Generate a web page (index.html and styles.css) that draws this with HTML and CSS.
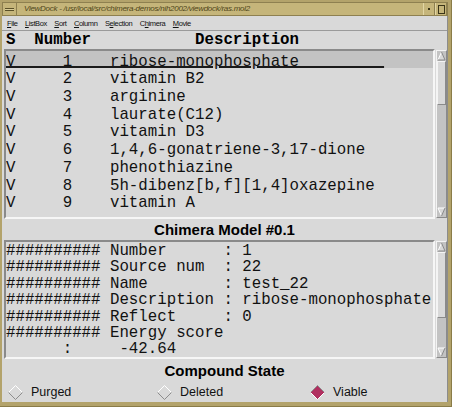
FILE: index.html
```html
<!DOCTYPE html>
<html>
<head>
<meta charset="utf-8">
<link rel="stylesheet" href="styles.css">
</head>
<body>
<div class="win">
  <div class="titlebar">
    <div class="tb-btn menu-btn"><span class="dash"></span></div>
    <div class="title">ViewDock - /usr/local/src/chimera-demos/nih2002/viewdock/ras.mol2</div>
    <div class="tb-btn min-btn"><span class="dot"></span></div>
    <div class="tb-btn max-btn"><span class="sq"></span></div>
  </div>
  <div class="client">
    <div class="menubar">
      <span class="mi"><u>F</u>ile</span>
      <span class="mi"><u>L</u>istBox</span>
      <span class="mi"><u>S</u>ort</span>
      <span class="mi"><u>C</u>olumn</span>
      <span class="mi">S<u>e</u>lection</span>
      <span class="mi">C<u>h</u>imera</span>
      <span class="mi"><u>M</u>ovie</span>
    </div>
    <div class="header">S  Number           Description</div>
    <div class="pane list-pane">
      <div class="box listbox">
        <div class="row sel"><span class="active">V     1    ribose-monophosphate         </span></div>
        <div class="row">V     2    vitamin B2</div>
        <div class="row">V     3    arginine</div>
        <div class="row">V     4    laurate(C12)</div>
        <div class="row">V     5    vitamin D3</div>
        <div class="row">V     6    1,4,6-gonatriene-3,17-dione</div>
        <div class="row">V     7    phenothiazine</div>
        <div class="row">V     8    5h-dibenz[b,f][1,4]oxazepine</div>
        <div class="row">V     9    vitamin A</div>
      </div>
      <div class="scrollbar">
        <svg class="arrow" width="9" height="10" viewBox="0 0 9 10"><polygon points="4.5,1 8,9 1,9" fill="#d9d9d9"/><polyline points="1,9 4.5,1" stroke="#ffffff" fill="none"/><polyline points="4.5,1 8,9 1,9" stroke="#8a8a8a" fill="none"/></svg>
        <div class="trough"><div class="thumb t1"></div></div>
        <svg class="arrow" width="9" height="10" viewBox="0 0 9 10"><polygon points="1,1 8,1 4.5,9" fill="#d9d9d9"/><polyline points="4.5,9 1,1 8,1" stroke="#ffffff" fill="none"/><polyline points="8,1 4.5,9" stroke="#8a8a8a" fill="none"/></svg>
      </div>
    </div>
    <div class="section">Chimera Model #0.1</div>
    <div class="pane text-pane">
      <div class="box textbox">
        <div class="tl">########## Number      : 1</div>
        <div class="tl">########## Source num  : 22</div>
        <div class="tl">########## Name        : test_22</div>
        <div class="tl">########## Description : ribose-monophosphate</div>
        <div class="tl">########## Reflect     : 0</div>
        <div class="tl">########## Energy score</div>
        <div class="tl">      :     -42.64</div>
      </div>
      <div class="scrollbar">
        <svg class="arrow" width="9" height="10" viewBox="0 0 9 10"><polygon points="4.5,1 8,9 1,9" fill="#d9d9d9"/><polyline points="1,9 4.5,1" stroke="#ffffff" fill="none"/><polyline points="4.5,1 8,9 1,9" stroke="#8a8a8a" fill="none"/></svg>
        <div class="trough"><div class="thumb t2"></div></div>
        <svg class="arrow" width="9" height="10" viewBox="0 0 9 10"><polygon points="1,1 8,1 4.5,9" fill="#d9d9d9"/><polyline points="4.5,9 1,1 8,1" stroke="#ffffff" fill="none"/><polyline points="8,1 4.5,9" stroke="#8a8a8a" fill="none"/></svg>
      </div>
    </div>
    <div class="section sec2">Compound State</div>
    <div class="radios">
      <label class="radio">
        <svg width="15" height="15" viewBox="0 0 15 15"><polygon points="7.5,0.5 14.5,7.5 7.5,14.5 0.5,7.5" fill="#d9d9d9"/><polyline points="0.5,7.5 7.5,0.5 14.5,7.5" stroke="#ffffff" fill="none"/><polyline points="14.5,7.5 7.5,14.5 0.5,7.5" stroke="#8c8c8c" fill="none"/></svg>
        <span>Purged</span>
      </label>
      <label class="radio">
        <svg width="15" height="15" viewBox="0 0 15 15"><polygon points="7.5,0.5 14.5,7.5 7.5,14.5 0.5,7.5" fill="#d9d9d9"/><polyline points="0.5,7.5 7.5,0.5 14.5,7.5" stroke="#ffffff" fill="none"/><polyline points="14.5,7.5 7.5,14.5 0.5,7.5" stroke="#8c8c8c" fill="none"/></svg>
        <span>Deleted</span>
      </label>
      <label class="radio on">
        <svg width="15" height="15" viewBox="0 0 15 15"><polygon points="7.5,0.5 14.5,7.5 7.5,14.5 0.5,7.5" fill="#b03060"/><polyline points="0.5,7.5 7.5,0.5 14.5,7.5" stroke="#8c8c8c" fill="none"/><polyline points="14.5,7.5 7.5,14.5 0.5,7.5" stroke="#ffffff" fill="none"/></svg>
        <span>Viable</span>
      </label>
    </div>
  </div>
</div>
</body>
</html>
```

FILE: styles.css
```css
* { box-sizing: border-box; }
html, body { margin: 0; padding: 0; }
body {
  width: 452px;
  height: 407px;
  overflow: hidden;
  background: #b3a36b;
  font-family: "Liberation Sans", Arial, sans-serif;
}
.win {
  height: 407px;
  padding: 2px 3px 4px 2px;
  display: flex;
  flex-direction: column;
  background: #b3a36b;
  border-right: 1px solid #8a7c48;
  border-bottom: 1px solid #8a7c48;
}
.titlebar {
  height: 14px;
  flex: none;
  display: flex;
  background: #c5b57a;
  border: 1px solid #8e8050;
}
.tb-btn {
  width: 12px;
  display: flex;
  align-items: center;
  justify-content: center;
  border-left: 1px solid #e2d6a4;
  border-right: 1px solid #8e8050;
}
.menu-btn { width: 14px; border-left: none; }
.dash { width: 9px; height: 3px; background: #d8cc98; border: 1px solid #5a5028; border-width: 1px 0; }
.dot { width: 2px; height: 2px; background: #3a3418; }
.sq { width: 7px; height: 9px; border: 1px solid #3a3418; }
.title {
  flex: 1;
  padding-left: 7px;
  font-size: 8px;
  letter-spacing: -0.27px;
  font-style: italic;
  line-height: 12px;
  color: #4f4519;
  white-space: nowrap;
  overflow: hidden;
}
.client {
  flex: 1;
  display: flex;
  flex-direction: column;
  background: #d9d9d9;
  border-right: 1px solid #8c8c8c;
}
.menubar {
  height: 15px;
  flex: none;
  display: flex;
  align-items: center;
  gap: 7.5px;
  padding-left: 5px;
  font-size: 7.5px;
  letter-spacing: -0.4px;
  color: #111;
  border-bottom: 1px solid #9a9a9a;
}
.mi u { text-decoration-thickness: 1px; text-underline-offset: 1px; }
.header {
  height: 18px;
  flex: none;
  padding-left: 4px;
  font-family: "Liberation Mono", "Courier New", monospace;
  font-weight: bold;
  font-size: 15.75px;
  line-height: 19px;
  white-space: pre;
  color: #000;
}
.pane {
  display: flex;
  flex: none;
  padding: 0 0 0 2px;
  gap: 1px;
}
.list-pane { height: 170px; }
.text-pane { height: 119px; }
.box {
  flex: 1;
  border: 2px solid;
  border-color: #8a8a8a #f6f6f6 #f6f6f6 #8a8a8a;
  font-family: "Liberation Mono", "Courier New", monospace;
  font-size: 15.75px;
  color: #111;
  overflow: hidden;
}
.row {
  height: 17.75px;
  padding-top: 3px;
  line-height: 17.75px;
  white-space: pre;
}
.row.sel { background: #c3c3c3; height: 17px; }
.active {
  text-decoration: underline;
  text-decoration-thickness: 2px;
  text-decoration-color: #1a1a1a;
  text-underline-offset: 0px;
}
.textbox { padding-top: 1px; }
.tl { height: 16.4px; line-height: 16.4px; white-space: pre; }
.scrollbar {
  width: 11px;
  display: flex;
  flex-direction: column;
  background: #c3c3c3;
  border: 1px solid;
  border-color: #f4f4f4 #8a8a8a #8a8a8a #f4f4f4;
  margin: 1px 0;
}
.arrow { display: block; flex: none; width: 9px; height: 10px; }
.trough { flex: 1; display: flex; flex-direction: column; }
.thumb {
  background: #d9d9d9;
  border: 1px solid;
  border-color: #f4f4f4 #8a8a8a #8a8a8a #f4f4f4;
}
.t1 { height: 44px; }
.t2 { height: 66px; }
.section {
  height: 21px;
  flex: none;
  text-align: center;
  font-weight: bold;
  font-size: 15px;
  line-height: 22px;
  color: #000;
}
.sec2 { height: 20px; line-height: 23px; }
.radios {
  flex: 1;
  display: grid;
  grid-template-columns: 149px 153px 1fr;
  align-items: center;
  padding-top: 3px;
}
.radio {
  display: flex;
  align-items: center;
  gap: 8px;
  padding-left: 6px;
  font-size: 12.5px;
  color: #111;
}
```
